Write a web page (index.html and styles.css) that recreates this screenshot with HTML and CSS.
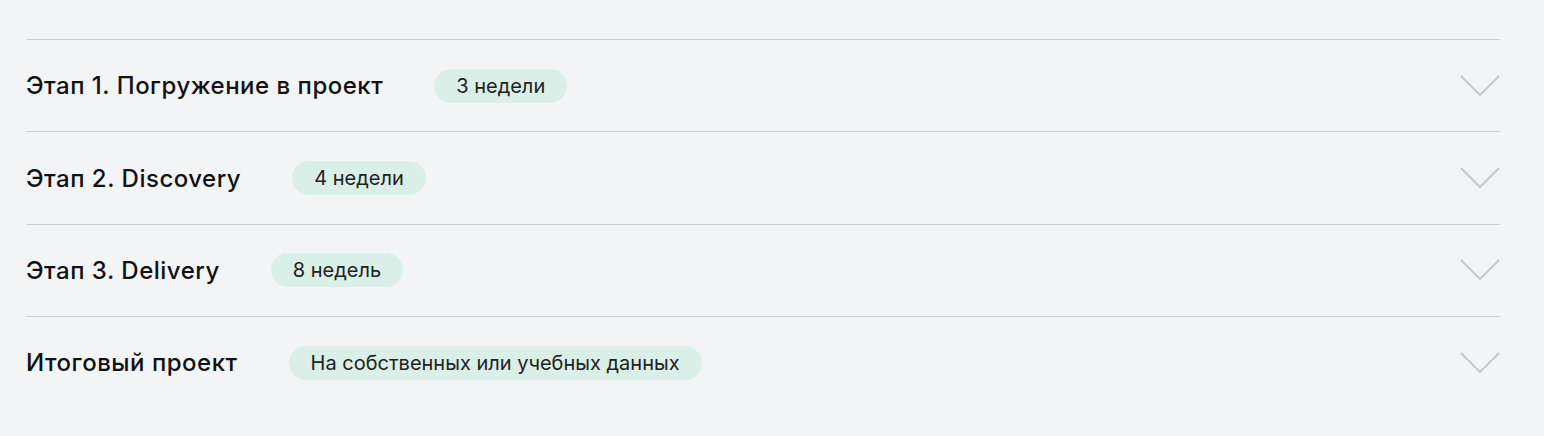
FILE: index.html
```html
<!DOCTYPE html>
<html lang="ru">
<head>
    <meta charset="UTF-8">
    <meta name="viewport" content="width=device-width, initial-scale=1.0">
    <title>program</title>
    <link rel="stylesheet" href="styles.css">
</head>
<body>
    <div class="stages">
        <div class="stage">
            <div class="left">
                <h3>Этап 1. Погружение в проект</h3>
                <span class="pill">3 недели</span>
            </div>
            <svg class="arrow" width="40" height="24" viewBox="0 0 40 24"><path d="M1 2 L20 21 L39 2" fill="none" stroke="#c6c8cb" stroke-width="2"/></svg>
        </div>
        <div class="stage">
            <div class="left">
                <h3>Этап 2. Discovery</h3>
                <span class="pill">4 недели</span>
            </div>
            <svg class="arrow" width="40" height="24" viewBox="0 0 40 24"><path d="M1 2 L20 21 L39 2" fill="none" stroke="#c6c8cb" stroke-width="2"/></svg>
        </div>
        <div class="stage">
            <div class="left">
                <h3>Этап 3. Delivery</h3>
                <span class="pill">8 недель</span>
            </div>
            <svg class="arrow" width="40" height="24" viewBox="0 0 40 24"><path d="M1 2 L20 21 L39 2" fill="none" stroke="#c6c8cb" stroke-width="2"/></svg>
        </div>
        <div class="stage">
            <div class="left">
                <h3>Итоговый проект</h3>
                <span class="pill">На собственных или учебных данных</span>
            </div>
            <svg class="arrow" width="40" height="24" viewBox="0 0 40 24"><path d="M1 2 L20 21 L39 2" fill="none" stroke="#c6c8cb" stroke-width="2"/></svg>
        </div>
    </div>
</body>
</html>
```

FILE: styles.css
```css
*{
    padding: 0;margin: 0;
    box-sizing: border-box;
}
body{
    background: #f3f4f6;
    font-family: Inter, "Noto Sans", sans-serif;
    color: #111;
}
.stages{
    width: 1474px;
    margin-left: 26px;
    padding-top: 39px;
}
.stage{
    display: flex;
    justify-content: space-between;
    align-items: center;
    height: 92.4px;
    border-top: 1px solid #cfd0d2;
}
.left{
    display: flex;
    align-items: center;
    gap: 51px;
}
.stage h3{
    font-size: 24px;
    font-weight: 500;
    letter-spacing: 0.5px;
}
.pill{
    background: #d9efe7;
    border-radius: 17px;
    height: 34px;
    line-height: 34px;
    padding: 0 22px;
    font-size: 20px;
    color: #222;
}
```
